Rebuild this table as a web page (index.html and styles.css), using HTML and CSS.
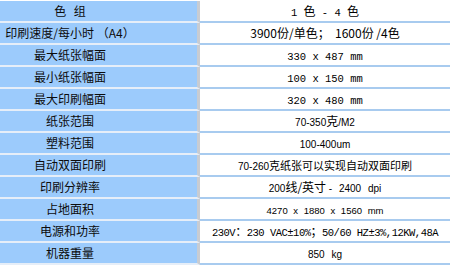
FILE: index.html
```html
<!DOCTYPE html>
<html lang="zh-CN">
<head>
<meta charset="utf-8">
<title>技术参数</title>
<link rel="stylesheet" href="styles.css">
</head>
<body>
<table class="spec">
  <tr><td class="k k-wide">色 组</td><td class="v"><span class="m">1 </span>色<span class="m"> - 4 </span>色</td></tr>
  <tr><td class="k">印刷速度/每小时 （A4）</td><td class="v">3900份/单色；&nbsp; 1600份 /4色</td></tr>
  <tr><td class="k">最大纸张幅面</td><td class="v"><span class="m">330 x 487 mm</span></td></tr>
  <tr><td class="k">最小纸张幅面</td><td class="v"><span class="m">100 x 150 mm</span></td></tr>
  <tr><td class="k">最大印刷幅面</td><td class="v"><span class="m">320 x 480 mm</span></td></tr>
  <tr><td class="k">纸张范围</td><td class="v"><span class="s">70-350</span>克<span class="s">/M2</span></td></tr>
  <tr><td class="k">塑料范围</td><td class="v"><span class="s">100-400um</span></td></tr>
  <tr><td class="k">自动双面印刷</td><td class="v v-small"><span class="s">70-260</span>克纸张可以实现自动双面印刷</td></tr>
  <tr><td class="k">印刷分辨率</td><td class="v"><span class="s">200</span>线/英寸 <span class="s ws">- 2400 dpi</span></td></tr>
  <tr><td class="k">占地面积</td><td class="v"><span class="s s-narrow">4270 x 1880 x 1560 mm</span></td></tr>
  <tr><td class="k">电源和功率</td><td class="v v-tight"><span class="m">230V</span>：<span class="m">230 VAC±10%</span>；<span class="m">50/60 HZ±3%,12KW,48A</span></td></tr>
  <tr><td class="k">机器重量</td><td class="v"><span class="s ws">850 kg</span></td></tr>
</table>
</body>
</html>
```
FILE: styles.css
```css
html, body {
  margin: 0;
  padding: 0;
  background: #ffffff;
}

body {
  padding-top: 1px;
}

.spec {
  width: 450px;
  border-collapse: separate;
  border-spacing: 0;
  font-family: "Noto Sans CJK SC", "Liberation Sans", sans-serif;
  font-size: 12px;
  color: #000000;
  table-layout: fixed;
}

.spec tr {
  height: 22px;
}

.spec td {
  box-sizing: border-box;
  height: 22px;
  line-height: 14px;
  padding: 0;
  text-align: center;
  white-space: nowrap;
  vertical-align: middle;
  overflow: hidden;
}

.k {
  width: 200px;
  padding-right: 57px !important;
  background: #9ccbfc;
  border-right: 3px solid #c8ccd2;
  border-bottom: 2px solid #e6eef8;
  color: #0c0c0c;
}

.k-wide {
  word-spacing: 5px;
}

.v {
  background: #ffffff;
  border-bottom: 2px solid #a8cbef;
}

.v-small {
  font-size: 11px;
}

.v-tight {
  letter-spacing: -0.5px;
}

.m {
  font-family: "Liberation Mono", "Noto Sans CJK SC", monospace;
  font-size: 10.5px;
  line-height: 10px;
}

.s {
  font-family: "Liberation Sans", "Noto Sans CJK SC", sans-serif;
  font-size: 10px;
  line-height: 10px;
}

.s-narrow {
  font-size: 9.5px;
  word-spacing: 3px;
}

.ws {
  word-spacing: 4px;
}
```
